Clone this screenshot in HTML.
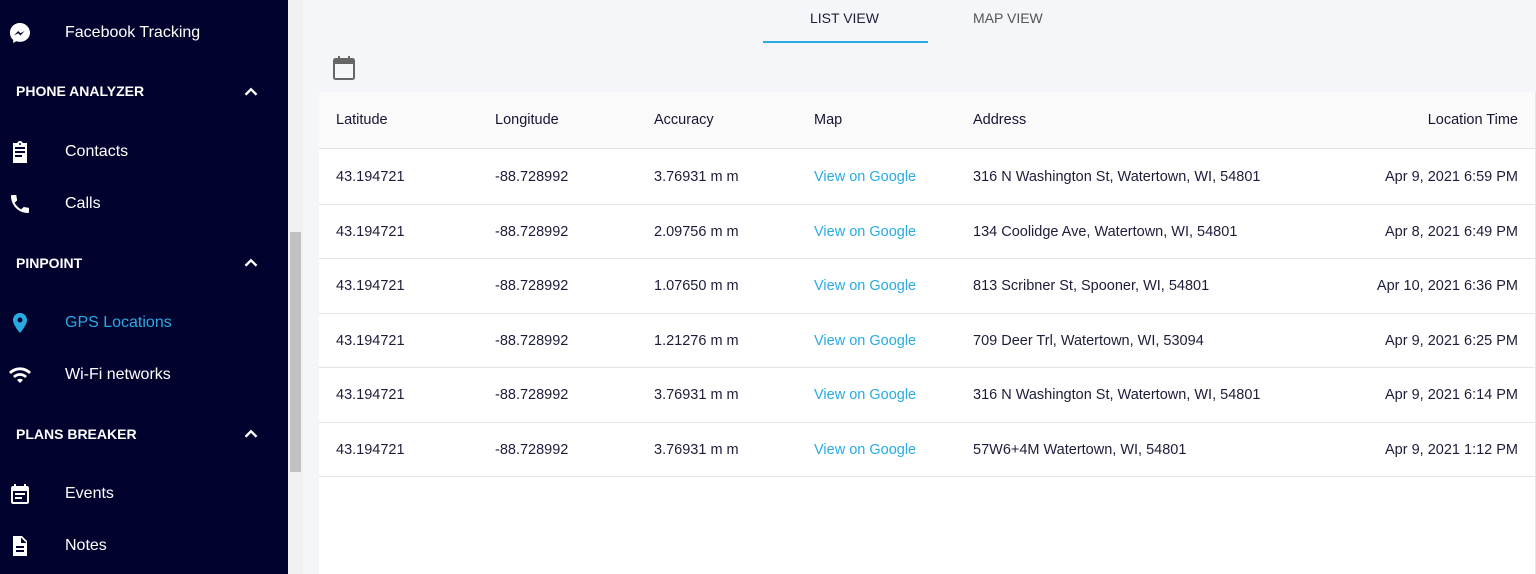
<!DOCTYPE html>
<html><head><style>
*{margin:0;padding:0;box-sizing:border-box}
body{width:1536px;height:574px;overflow:hidden;font-family:"Liberation Sans",sans-serif;background:#f4f6f9;position:relative}
.sb{position:absolute;left:0;top:0;width:288px;height:574px;background:#02022f;color:#fff}
.it{position:absolute;left:65px;font-size:16px;transform:translateY(-50%)}
.ic{position:absolute;left:8px;transform:translateY(-50%)}
.hd{position:absolute;left:16px;font-size:14px;font-weight:bold;transform:translateY(-50%)}
.ch{position:absolute;left:240px;transform:translateY(-50%)}
.scr{position:absolute;left:288px;top:0;width:15px;height:574px;background:#f1f1f1}
.th{position:absolute;left:290px;top:232px;width:11px;height:240px;background:#c1c1c1}
.tab{position:absolute;top:10px;font-size:14px;color:#555}
.tbl{position:absolute;left:319px;top:92px;width:1217px;height:482px;background:#fff;border-right:1px solid #e6e6e6}
.hr{position:absolute;left:0;top:0;width:100%;height:57px;background:#fafafa;border-bottom:1px solid #e2e2e2}
.c{position:absolute;font-size:14.5px;color:#1d1d3a;transform:translateY(-50%);white-space:nowrap}
.hr .c{font-weight:500;top:28px;color:#151535}
.row{position:absolute;left:0;width:100%;height:54.5px;border-bottom:1px solid #e4e4e4}
.row .c{top:27px}
.lk{color:#29abe2}
.r{right:17px}
</style></head><body>
<div class="sb">
<svg class="ic" style="top:33px" width="24" height="24" viewBox="0 0 24 24"><path fill="#fff" d="M12 2C6.4 2 2 6.1 2 11.7c0 2.9 1.2 5.5 3.2 7.2V22l3-1.7c1.2.3 2.4.5 3.8.5 5.6 0 10-4.1 10-9.1S17.6 2 12 2z"/><path fill="#02022f" d="M6 14.5l4.2-4.5 2.2 2.3 4.2-2.3-4.2 4.5-2.2-2.3z"/></svg>
<div class="it" style="top:33px">Facebook Tracking</div>
<div class="hd" style="top:91px">PHONE ANALYZER</div>
<svg class="ch" style="top:92px" width="22" height="22" viewBox="0 0 24 24"><path d="M6 15l6-6 6 6" stroke="#fff" stroke-width="2.6" fill="none"/></svg>
<svg class="ic" style="top:152px" width="24" height="24" viewBox="0 0 24 24"><path fill="#fff" d="M19 3h-4.2C14.4 1.8 13.3 1 12 1s-2.4.8-2.8 2H5v20h14V3zm-7 0a1 1 0 110 2 1 1 0 010-2zm2 14H7v-2h7v2zm3-4H7v-2h10v2zm0-4H7V7h10v2z"/></svg>
<div class="it" style="top:152px">Contacts</div>
<svg class="ic" style="top:204px" width="24" height="24" viewBox="0 0 24 24"><path fill="#fff" d="M6.6 10.8c1.4 2.8 3.8 5.1 6.6 6.6l2.2-2.2c.3-.3.7-.4 1-.2 1.1.4 2.3.6 3.6.6.6 0 1 .4 1 1V20c0 .6-.4 1-1 1C10.6 21 3 13.4 3 4c0-.6.4-1 1-1h3.5c.6 0 1 .4 1 1 0 1.3.2 2.5.6 3.6.1.3 0 .7-.2 1L6.6 10.8z"/></svg>
<div class="it" style="top:204px">Calls</div>
<div class="hd" style="top:263px">PINPOINT</div>
<svg class="ch" style="top:263px" width="22" height="22" viewBox="0 0 24 24"><path d="M6 15l6-6 6 6" stroke="#fff" stroke-width="2.6" fill="none"/></svg>
<svg class="ic" style="top:323px" width="24" height="24" viewBox="0 0 24 24"><path fill="#29abe2" d="M12 2C8.1 2 5 5.1 5 9c0 5.2 7 13 7 13s7-7.8 7-13c0-3.9-3.1-7-7-7zm0 9.5a2.5 2.5 0 110-5 2.5 2.5 0 010 5z"/></svg>
<div class="it" style="top:323px;color:#29abe2">GPS Locations</div>
<svg class="ic" style="top:375px" width="24" height="24" viewBox="0 0 24 24"><path fill="#fff" d="M1 9l2 2c5-5 13-5 18 0l2-2C16.9 2.9 7.1 2.9 1 9zm8 8l3 3 3-3c-1.7-1.7-4.3-1.7-6 0zm-4-4l2 2c2.8-2.8 7.2-2.8 10 0l2-2C15.1 9.1 8.9 9.1 5 13z"/></svg>
<div class="it" style="top:375px">Wi-Fi networks</div>
<div class="hd" style="top:434px">PLANS BREAKER</div>
<svg class="ch" style="top:434px" width="22" height="22" viewBox="0 0 24 24"><path d="M6 15l6-6 6 6" stroke="#fff" stroke-width="2.6" fill="none"/></svg>
<svg class="ic" style="top:494px" width="24" height="24" viewBox="0 0 24 24"><path fill="#fff" d="M19 4h-1V2h-2v2H8V2H6v2H5C3.9 4 3 4.9 3 6v14c0 1.1.9 2 2 2h14c1.1 0 2-.9 2-2V6c0-1.1-.9-2-2-2zm0 16H5V9h14v11zM7 11h10v2H7zm0 4h7v2H7z"/></svg>
<div class="it" style="top:494px">Events</div>
<svg class="ic" style="top:546px" width="24" height="24" viewBox="0 0 24 24"><path fill="#fff" d="M14 2H5v20h14V7l-5-5zm2 16H8v-2h8v2zm0-4H8v-2h8v2zm-3-5V3.5L18.5 9H13z"/></svg>
<div class="it" style="top:546px">Notes</div>
</div>
<div class="scr"></div><div class="th"></div>
<div class="tab" style="left:810px;color:#1d1d3a">LIST VIEW</div>
<div style="position:absolute;left:763px;top:41px;width:165px;height:2px;background:#29abe2"></div>
<div class="tab" style="left:973px">MAP VIEW</div>
<svg style="position:absolute;left:332px;top:55px" width="24" height="26" viewBox="0 0 24 26"><rect x="2" y="4" width="20" height="20" rx="1.5" fill="none" stroke="#666" stroke-width="2"/><rect x="2" y="4" width="20" height="5" fill="#666"/><rect x="6" y="1" width="2" height="4" fill="#666"/><rect x="16" y="1" width="2" height="4" fill="#666"/></svg>
<div class="tbl">
<div class="hr"><div class="c" style="left:17px">Latitude</div><div class="c" style="left:176px">Longitude</div><div class="c" style="left:335px">Accuracy</div><div class="c" style="left:495px">Map</div><div class="c" style="left:654px">Address</div><div class="c r">Location Time</div></div>
<div class="row" style="top:58px"><div class="c" style="left:17px">43.194721</div><div class="c" style="left:176px">-88.728992</div><div class="c" style="left:335px">3.76931 m m</div><div class="c lk" style="left:495px">View on Google</div><div class="c" style="left:654px">316 N Washington St, Watertown, WI, 54801</div><div class="c r">Apr 9, 2021 6:59 PM</div></div>
<div class="row" style="top:112.5px"><div class="c" style="left:17px">43.194721</div><div class="c" style="left:176px">-88.728992</div><div class="c" style="left:335px">2.09756 m m</div><div class="c lk" style="left:495px">View on Google</div><div class="c" style="left:654px">134 Coolidge Ave, Watertown, WI, 54801</div><div class="c r">Apr 8, 2021 6:49 PM</div></div>
<div class="row" style="top:167px"><div class="c" style="left:17px">43.194721</div><div class="c" style="left:176px">-88.728992</div><div class="c" style="left:335px">1.07650 m m</div><div class="c lk" style="left:495px">View on Google</div><div class="c" style="left:654px">813 Scribner St, Spooner, WI, 54801</div><div class="c r">Apr 10, 2021 6:36 PM</div></div>
<div class="row" style="top:221.5px"><div class="c" style="left:17px">43.194721</div><div class="c" style="left:176px">-88.728992</div><div class="c" style="left:335px">1.21276 m m</div><div class="c lk" style="left:495px">View on Google</div><div class="c" style="left:654px">709 Deer Trl, Watertown, WI, 53094</div><div class="c r">Apr 9, 2021 6:25 PM</div></div>
<div class="row" style="top:276px"><div class="c" style="left:17px">43.194721</div><div class="c" style="left:176px">-88.728992</div><div class="c" style="left:335px">3.76931 m m</div><div class="c lk" style="left:495px">View on Google</div><div class="c" style="left:654px">316 N Washington St, Watertown, WI, 54801</div><div class="c r">Apr 9, 2021 6:14 PM</div></div>
<div class="row" style="top:330.5px"><div class="c" style="left:17px">43.194721</div><div class="c" style="left:176px">-88.728992</div><div class="c" style="left:335px">3.76931 m m</div><div class="c lk" style="left:495px">View on Google</div><div class="c" style="left:654px">57W6+4M Watertown, WI, 54801</div><div class="c r">Apr 9, 2021 1:12 PM</div></div>
</div>
</body></html>
